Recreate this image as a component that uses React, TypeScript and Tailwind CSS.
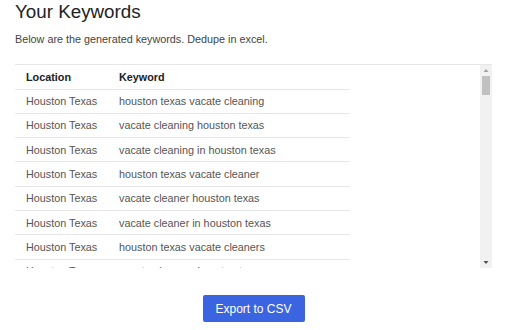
const services = [
  'vacate cleaning',
  'vacate cleaner',
  'vacate cleaners',
  'vacate cleaning service',
  'vacate cleaning services',
  'vacate clean',
  'vacate cleans',
  'end of lease cleaning',
  'end of lease cleaner',
  'end of lease cleaners',
  'bond cleaning',
  'bond cleaner',
  'bond cleaners',
  'move out cleaning',
  'move out cleaner',
  'move out cleaners',
  'exit cleaning',
  'exit cleaner',
  'exit cleaners',
  'bond back cleaning',
  'bond back cleaner',
  'lease cleaning',
  'lease cleaner',
  'lease cleaners',
  'tenancy cleaning',
  'tenancy cleaner',
  'tenancy cleaners',
]

const location = 'Houston Texas'

const rows = services.flatMap((s) => {
  const loc = location.toLowerCase()
  return [`${loc} ${s}`, `${s} ${loc}`, `${s} in ${loc}`]
})

function Scrollbar() {
  return (
    <div className="w-[12px] shrink-0 flex flex-col items-center bg-[#f1f1f1]">
      <svg width="12" height="11" viewBox="0 0 12 11" className="shrink-0">
        <path d="M3.5 7 L8.5 7 L6 4 Z" fill="#a3a3a3" />
      </svg>
      <div className="w-[8px] h-[19px] bg-[#c1c1c1]" />
      <div className="flex-1" />
      <svg width="12" height="11" viewBox="0 0 12 11" className="shrink-0">
        <path d="M3.5 4 L8.5 4 L6 7 Z" fill="#505050" />
      </svg>
    </div>
  )
}

export default function App() {
  return (
    <div className="w-[512px] h-[330px] bg-white px-[15px] pt-[1px] font-['Liberation_Sans',Arial,sans-serif] overflow-hidden">
      <h1 className="text-[18.8px] leading-[22px] text-[#222]">Your Keywords</h1>
      <p className="mt-[9px] text-[10.8px] leading-[14px] text-[#444]">
        Below are the generated keywords. Dedupe in excel.
      </p>

      <div className="mt-[18px] w-[477px] h-[204px] border-t border-[#e6e6e6] flex">
        <div className="flex-1 overflow-hidden">
          <table className="w-[335px] border-collapse text-[10.8px]">
            <thead>
              <tr className="h-[24px] border-b border-[#e6e6e6]">
                <th className="w-[93px] pl-[11px] text-left font-bold text-[#222]">Location</th>
                <th className="pl-[11px] text-left font-bold text-[#222]">Keyword</th>
              </tr>
            </thead>
            <tbody>
              {rows.map((kw, i) => (
                <tr key={i} className="h-[24.3px] border-b border-[#e6e6e6]">
                  <td className="pl-[11px] text-[#555] whitespace-nowrap">{location}</td>
                  <td className="pl-[11px] text-[#555] whitespace-nowrap">{kw}</td>
                </tr>
              ))}
            </tbody>
          </table>
        </div>
        <Scrollbar />
      </div>

      <div className="w-[477px] flex justify-center mt-[27px]">
        <button className="w-[102px] h-[27px] rounded-[2px] bg-[#3b65e0] text-white text-[12px]">
          Export to CSV
        </button>
      </div>
    </div>
  )
}
